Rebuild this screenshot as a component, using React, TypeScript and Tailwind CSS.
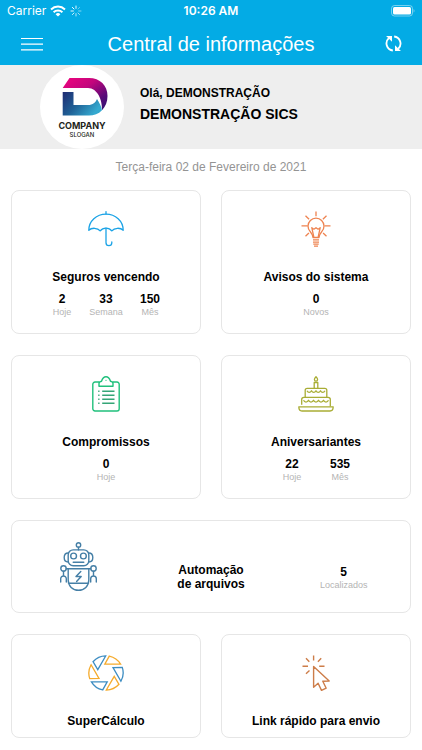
import React from "react";
import { clsx } from "clsx";

type Stat = { value: string; label: string };

const StatusBar = () => {
  return (
    <div className="grid h-[22px] grid-cols-3 items-center px-[7px] font-['Inter',sans-serif] text-[12px] leading-4 text-white">
      <div className="flex items-center gap-1">
        <span>Carrier</span>
        <svg viewBox="0 0 16 12" className="h-3 w-4" fill="none" stroke="currentColor" strokeWidth="2">
          <path d="M1 4.4a10.2 10.2 0 0 1 14 0" />
          <path d="M3.6 7.2a6.4 6.4 0 0 1 8.8 0" />
          <path d="M8 11.6 5.6 9.2a3.4 3.4 0 0 1 4.8 0z" fill="currentColor" stroke="none" />
        </svg>
        <svg viewBox="0 0 12 12" className="h-3 w-3" fill="none" stroke="currentColor" strokeLinecap="round">
          <path d="M6 1v2.4" opacity=".9" />
          <path d="M9.6 2.4 8 4" opacity=".4" />
          <path d="M11 6H8.6" opacity=".5" />
          <path d="M9.6 9.6 8 8" opacity=".6" />
          <path d="M6 11V8.6" opacity=".7" />
          <path d="M2.4 9.6 4 8" opacity=".8" />
          <path d="M1 6h2.4" opacity=".9" />
          <path d="M2.4 2.4 4 4" />
        </svg>
      </div>
      <span className="text-center font-semibold">10:26 AM</span>
      <svg viewBox="0 0 24 12" className="h-3 w-6 justify-self-end" fill="none">
        <rect x="0.5" y="0.5" width="21" height="10.5" rx="3" stroke="#fff" strokeOpacity=".45" />
        <rect x="2" y="2" width="18" height="7.5" rx="1.5" fill="#fff" />
        <path d="M22.6 4v3.6c1.2-.5 1.2-3.1 0-3.6z" fill="#fff" fillOpacity=".5" />
      </svg>
    </div>
  );
};

const NavBar = () => {
  return (
    <div className="flex h-[43px] items-center justify-between px-5 text-white">
      <button type="button" aria-label="Menu" className="w-6">
        <svg viewBox="0 0 24 14" className="h-[14px] w-6" stroke="currentColor" strokeWidth="1.2">
          <path d="M1 1.5h22M1 7.2h22M1 12.9h22" />
        </svg>
      </button>
      <h1 className="text-[20px] leading-6 font-normal">Central de informações</h1>
      <button type="button" aria-label="Atualizar" className="flex w-6 justify-end">
        <svg viewBox="0 0 16 16" className="h-[17px] w-[17px]" fill="none" stroke="currentColor" strokeWidth="1.7">
          <path d="M7.4 14.6A6.7 6.7 0 0 1 3.6 3" />
          <path d="M8.6 1.4A6.7 6.7 0 0 1 12.4 13" />
          <path d="M1 .9h5.6v5.4z" fill="currentColor" stroke="none" />
          <path d="M15 15.1H9.4V9.7z" fill="currentColor" stroke="none" />
        </svg>
      </button>
    </div>
  );
};

const CompanyLogo = () => {
  return (
    <div className="flex h-[84px] w-[84px] shrink-0 flex-col items-center rounded-full bg-white pt-3 font-['Inter',sans-serif] text-[#231f20]">
      <svg viewBox="-5 0 51 40" className="h-10 w-[51px]">
        <defs>
          <linearGradient id="logoTop" x1="0" y1="0" x2="1" y2="1">
            <stop offset="0" stopColor="#f0047f" />
            <stop offset=".4" stopColor="#c3067c" />
            <stop offset=".75" stopColor="#560a78" />
            <stop offset="1" stopColor="#2e1670" />
          </linearGradient>
          <linearGradient id="logoBottom" x1="0" y1="0" x2="1" y2=".5">
            <stop offset="0" stopColor="#1f2a72" />
            <stop offset=".5" stopColor="#1f6196" />
            <stop offset="1" stopColor="#35a9cf" />
          </linearGradient>
        </defs>
        <path d="M7.5 1H27c11 0 18.5 7.5 18.5 18 0 6-2 10.5-5.5 14.2.5-10-4.500-22.200-14-22.200H.7z" fill="url(#logoTop)" />
        <path d="M.7 15h10.800v13H26c5 0 7.500-2.500 9-6 2 3 4.300 7 5 11.200C36.500 37 32 38.500 27 38.500H.7z" fill="url(#logoBottom)" />
      </svg>
      <span className="mt-1 text-[9px] leading-[10px] font-bold">COMPANY</span>
      <span className="text-[6px] leading-2 font-medium">SLOGAN</span>
    </div>
  );
};

const UmbrellaIcon = () => (
  <svg viewBox="0 0 36 36" className="h-9 w-9" fill="none" stroke="#1ba3e6" strokeWidth="1.3" strokeLinecap="round" strokeLinejoin="round">
    <path d="M18 .7V3" />
    <path d="M.8 19.3C.8 10.2 8.500 3.2 18 3.2s17.200 7 17.200 16.100c-2.700-2.800-8.700-2.800-11.400.6-1.400-1.900-3.500-2.800-5.800-2.800s-4.400.9-5.800 2.800C9.500 16.500 3.500 16.500.8 19.300z" />
    <path d="M18 17.200v14.600a2.900 2.900 0 0 0 5.800 0v-.9" />
  </svg>
);

const BulbIcon = () => (
  <svg viewBox="0 0 36 36" className="h-9 w-9" fill="none" stroke="#ee8350" strokeWidth="1.3" strokeLinejoin="round">
    <path d="M18 .5v4.700M3.500 14.800h6.200M26.500 14.800h6M7.500 4.800l3.600 3.500M28.500 4.800l-3.600 3.500M7.500 25.200l3.400-3.200M28.500 25.200l-3.400-3.200" />
    <path d="M15 26.500c0-2.700-1.200-4.100-2.700-5.800a8 8 0 1 1 11.400 0c-1.500 1.700-2.700 3.100-2.700 5.800z" />
    <path d="m15.800 26-2-9.300 2.100 1.500 2.100-1.500 2.100 1.500 2.100-1.500-2 9.300" />
    <path d="M15 28.800h6M15 31.100h6M15.300 33.200h5.400M16 35.200h4" />
  </svg>
);

const ClipboardIcon = () => (
  <svg viewBox="0 0 36 36" className="h-9 w-9" fill="none" stroke="#20c07c" strokeWidth="1.4" strokeLinejoin="round">
    <path d="M11.200 6H7a2.200 2.200 0 0 0-2.200 2.200v24.600A2.200 2.200 0 0 0 7 35h22a2.200 2.200 0 0 0 2.200-2.200V8.200A2.200 2.200 0 0 0 29 6h-4.200" />
    <path d="M11 10.300V7.500c0-1.300 1-1.900 2.500-2.200C14.400 2.500 15.800.7 18 .7s3.600 1.800 4.500 4.600c1.500.3 2.500.9 2.500 2.200v2.800z" />
    <circle cx="18" cy="4.300" r=".6" fill="#20c07c" stroke="none" />
    <path d="M14.200 15.300h12.300M14.200 19.300h12.300M14.200 23.300h12.300M14.200 27.300h12.300M10.200 15.300h1.300M10.200 19.300h1.300M10.200 23.300h1.300M10.200 27.300h1.300" stroke="#35a577" />
  </svg>
);

const CakeIcon = () => (
  <svg viewBox="0 0 36 36" className="h-9 w-9" fill="none" stroke="#a9ad35" strokeWidth="1.3" strokeLinejoin="round">
    <path d="M18 .8c1.200 1.300 1.600 2 1.600 2.800a1.600 1.600 0 0 1-3.200 0c0-.8.4-1.500 1.600-2.800z" />
    <path d="M16.200 12.300V6.500h3.600v5.800" />
    <path d="M7.200 21.300v-7a2 2 0 0 1 2-2h17.600a2 2 0 0 1 2 2v7" />
    <path d="M9 14.800c1.100 2.200 3.300 2.200 4.500 0 1.100 2.200 3.300 2.200 4.500 0 1.100 2.200 3.300 2.200 4.500 0 1.100 2.200 3.300 2.200 4.500 0" />
    <path d="M3.700 28.800v-5.300a2.200 2.200 0 0 1 2.200-2.200h24.200a2.200 2.200 0 0 1 2.200 2.200v7" />
    <path d="M5.500 24.300c1.200 2.300 3.800 2.300 5 0 1.200 2.300 3.800 2.300 5 0 1.200 2.300 3.800 2.300 5 0 1.200 2.300 3.800 2.300 5 0 1.200 2.300 3.800 2.300 5 0" />
    <path d="M.8 30.800h34.400c0 2.600-1.200 4.200-3.200 4.200H4c-2 0-3.200-1.600-3.200-4.200z" />
  </svg>
);

const RobotIcon = () => (
  <svg viewBox="0 0 37 49" className="h-[49px] w-[37px]" fill="none" stroke="#457fa6" strokeWidth="1.4" strokeLinecap="round" strokeLinejoin="round">
    <circle cx="18.5" cy="2.9" r="2.2" />
    <path d="M18.500 5.100v2.800" />
    <rect x="8.2" y="7.9" width="20.6" height="15.9" rx="5" />
    <circle cx="13.6" cy="14" r="2.9" />
    <circle cx="23.4" cy="14" r="2.9" />
    <path d="M13.200 20.200h10.600" />
    <path d="M8.200 11c-2.500 0-4 2-4 4.500s1.500 4.500 4 4.500M28.800 11c2.500 0 4 2 4 4.500s-1.500 4.500-4 4.500" />
    <circle cx="3.5" cy="26.5" r="2.7" />
    <circle cx="33.5" cy="26.5" r="2.7" />
    <path d="M6.200 26.700h24.600" />
    <path d="M8.200 26.700V38c0 6 4.500 10.300 10.300 10.300S28.800 44 28.800 38V26.700M8.500 41.300h20" />
    <path d="M3.500 29.200V34M.7 40v-3.200A2.800 2.800 0 0 1 3.500 34a2.800 2.800 0 0 1 2.800 2.800V40M33.500 29.200V34M30.700 40v-3.200a2.800 2.800 0 0 1 5.600 0V40" />
    <path d="m20.800 29.500-4.800 5h5.200l-4.600 5" />
  </svg>
);

// one aperture blade, turned six times round the centre
const blades = [0, 60, 120, 180, 240, 300];

const ApertureIcon = () => (
  <svg viewBox="0 0 36 36" className="h-9 w-9" fill="none" strokeWidth="1.3" strokeLinejoin="miter">
    {blades.map((angle, i) => (
      <path
        key={angle}
        d="M21.300 1.100A17.200 17.200 0 0 1 32.600 9.200H16.800z"
        stroke={i % 2 === 0 ? "#f5ab2d" : "#3d8dc2"}
        transform={`rotate(${angle} 18 18)`}
      />
    ))}
  </svg>
);

const ClickIcon = () => (
  <svg viewBox="0 0 36 36" className="h-9 w-9" fill="none" stroke="#cd7d49" strokeWidth="1.4" strokeLinejoin="round">
    <path d="M15.600.5v5M8 3.200l3.300 3.500M23.200 3.200l-3.300 3.500M4.500 11.200H10M21.200 11.200h5.300M8 18.700l3.500-3.300" />
    <path d="M15.600 11.500v20.700l4.500-4 3.400 7.200 4.700-2.200-3.400-7 6.400-.2z" />
  </svg>
);

const StatItem = ({ value, label, className }: Stat & { className?: string }) => (
  <div className={clsx("flex flex-col items-center", className)}>
    <span className="text-[12px] leading-[14px] font-bold">{value}</span>
    <span className="text-[9px] leading-3 text-[#b4b4b4]">{label}</span>
  </div>
);

const Card = ({
  title,
  icon,
  stats,
}: {
  title: string;
  icon: React.ReactNode;
  stats?: Stat[];
}) => {
  return (
    <button
      type="button"
      className={clsx(
        "flex flex-col items-center rounded-lg border border-[#e6e6e6] bg-white pt-5",
        stats ? "pb-[15px]" : "pb-2"
      )}
    >
      {icon}
      <span className="mt-[22px] text-[12px] leading-4 font-bold">{title}</span>
      {stats && (
        <div className="mt-[7px] flex justify-center">
          {stats.map((stat) => (
            <StatItem key={stat.label} {...stat} className={stats.length > 2 ? "w-11" : "w-12"} />
          ))}
        </div>
      )}
    </button>
  );
};

export default function App() {
  return (
    <div className="min-h-screen bg-white font-['Liberation_Sans',Arial,sans-serif] text-black">
      <header className="bg-[#03abe5]">
        <StatusBar />
        <NavBar />
      </header>

      <section className="flex bg-[#eeeeee] pl-10">
        <CompanyLogo />
        <div className="ml-4 pt-5">
          <p className="text-[12px] leading-4 font-bold">Olá, DEMONSTRAÇÃO</p>
          <p className="mt-[3px] text-[14px] leading-5 font-bold">DEMONSTRAÇÃO SICS</p>
        </div>
      </section>

      <p className="pt-[10px] text-center text-[12px] leading-4 text-[#949494]">Terça-feira 02 de Fevereiro de 2021</p>

      <main className="grid grid-cols-2 gap-x-5 gap-y-[21px] px-[11px] pt-[15px] pb-3">
        <Card
          title="Seguros vencendo"
          icon={<UmbrellaIcon />}
          stats={[
            { value: "2", label: "Hoje" },
            { value: "33", label: "Semana" },
            { value: "150", label: "Mês" },
          ]}
        />
        <Card title="Avisos do sistema" icon={<BulbIcon />} stats={[{ value: "0", label: "Novos" }]} />
        <Card title="Compromissos" icon={<ClipboardIcon />} stats={[{ value: "0", label: "Hoje" }]} />
        <Card
          title="Aniversariantes"
          icon={<CakeIcon />}
          stats={[
            { value: "22", label: "Hoje" },
            { value: "535", label: "Mês" },
          ]}
        />

        <button
          type="button"
          className="col-span-2 grid grid-cols-3 items-end justify-items-center rounded-lg border border-[#e6e6e6] bg-white pt-[21px] pb-[21px]"
        >
          <RobotIcon />
          <span className="text-[12px] leading-[14px] font-bold">
            Automação
            <br />
            de arquivos
          </span>
          <StatItem value="5" label="Localizados" />
        </button>

        <Card title="SuperCálculo" icon={<ApertureIcon />} />
        <Card title="Link rápido para envio" icon={<ClickIcon />} />
      </main>
    </div>
  );
}
